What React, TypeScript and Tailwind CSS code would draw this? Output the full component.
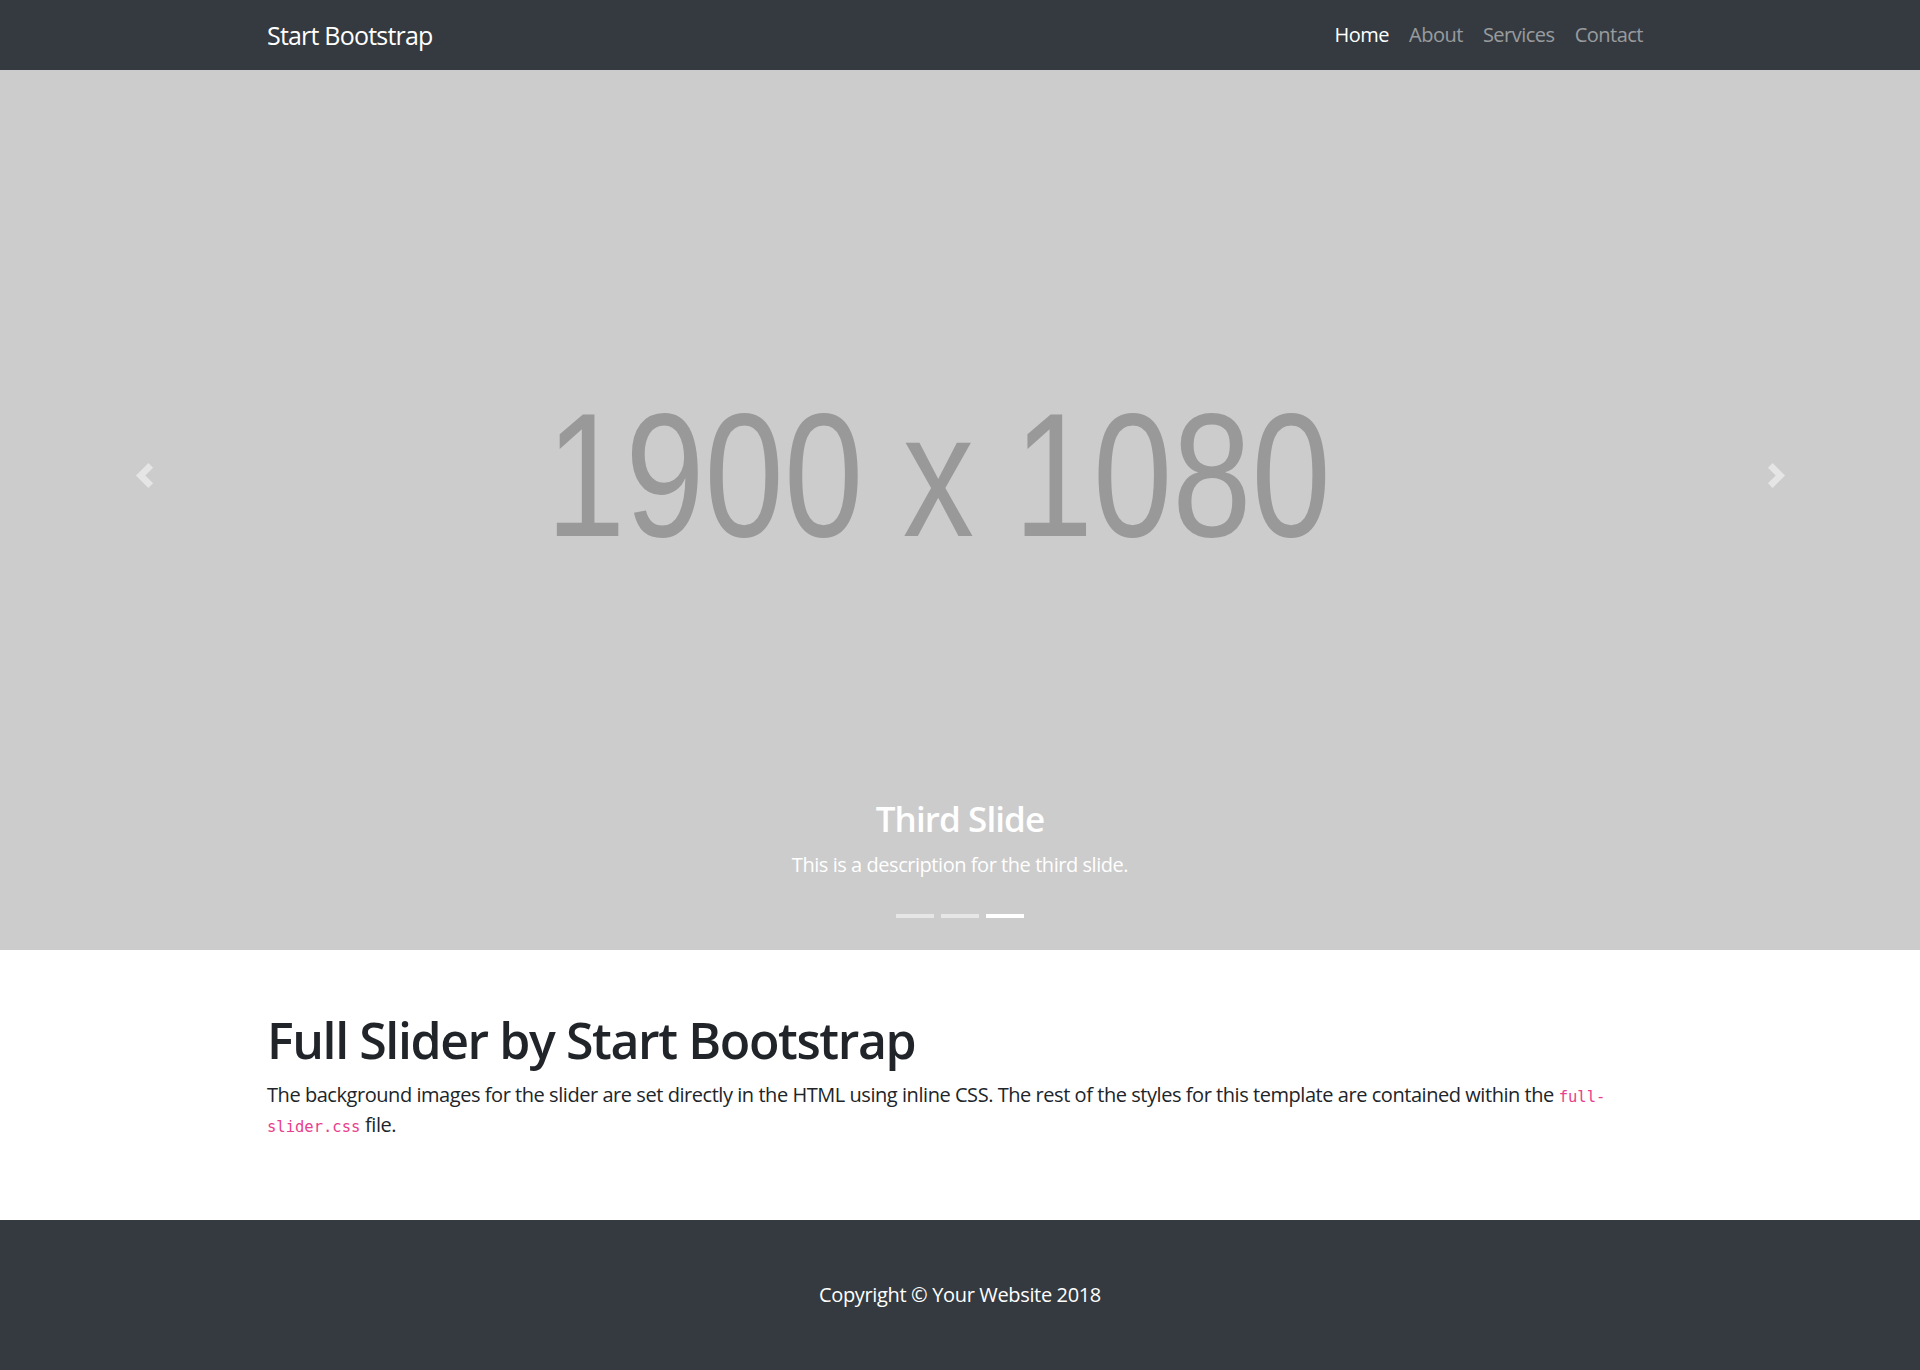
const navLinks = [
  { label: "Home", active: true },
  { label: "About", active: false },
  { label: "Services", active: false },
  { label: "Contact", active: false },
];

const sans = "font-['Open_Sans',sans-serif]";

function Chevron({ dir }: { dir: "prev" | "next" }) {
  // Bootstrap carousel control glyph
  const d =
    dir === "prev"
      ? "M5.25 0l-4 4 4 4 1.5-1.5-2.5-2.5 2.5-2.5-1.5-1.5z"
      : "M2.75 0l-1.5 1.5 2.5 2.5-2.5 2.5 1.5 1.5 4-4-4-4z";
  return (
    <svg viewBox="0 0 8 8" className="w-[25px] h-[25px]" fill="#fff">
      <path d={d} />
    </svg>
  );
}

export default function App() {
  return (
    <div className={`${sans} min-h-[1370px] bg-white`}>
      {/* Navbar */}
      <header className="h-[70px] bg-[#343a40]">
        <div className="w-[1386px] h-full mx-auto flex items-center justify-between">
          <a className="text-[25px] leading-[37px] tracking-[-0.8px] text-white">Start Bootstrap</a>
          <nav className="flex">
            {navLinks.map((l) => (
              <a
                key={l.label}
                className={`px-[10px] text-[20px] leading-[30px] tracking-[-0.5px] ${
                  l.active ? "text-white" : "text-white/50"
                }`}
              >
                {l.label}
              </a>
            ))}
          </nav>
        </div>
      </header>

      {/* Carousel */}
      <section className="relative h-[880px] bg-[#cccccc] overflow-hidden">
        <div className="h-full pb-[70px] flex items-center justify-center">
          <span className="mr-[44px] inline-block scale-x-[0.81] font-['Liberation_Sans',sans-serif] text-[176px] leading-none text-[#999999] select-none whitespace-nowrap">
            1900 x 1080
          </span>
        </div>

        <div className="absolute left-0 top-0 bottom-[70px] w-[15%] flex items-center justify-center opacity-50">
          <Chevron dir="prev" />
        </div>
        <div className="absolute right-0 top-0 bottom-[70px] w-[15%] flex items-center justify-center opacity-50">
          <Chevron dir="next" />
        </div>

        <div className="absolute left-[15%] right-[15%] bottom-[25px] pt-[25px] pb-[25px] text-center text-white">
          <h3 className="text-[35px] leading-[42px] font-semibold tracking-[-0.9px] mb-[10px]">Third Slide</h3>
          <p className="text-[20px] leading-[30px] tracking-[-0.45px] mb-[20px]">
            This is a description for the third slide.
          </p>
        </div>

        <div className="absolute left-0 right-0 bottom-[32px] flex justify-center gap-[7.5px]">
          <span className="w-[37.5px] h-[4px] bg-white/50" />
          <span className="w-[37.5px] h-[4px] bg-white/50" />
          <span className="w-[37.5px] h-[4px] bg-white" />
        </div>
      </section>

      {/* Page content */}
      <section className="w-[1386px] mx-auto py-[60px] text-[#212529]">
        <h1 className="text-[50px] leading-[60px] font-semibold tracking-[-1.4px] mb-[10px]">
          Full Slider by Start Bootstrap
        </h1>
        <p className="text-[20px] leading-[30px] tracking-[-0.45px] mb-[20px]">
          The background images for the slider are set directly in the HTML using inline CSS. The rest of the
          styles for this template are contained within the{" "}
          <code className="font-['DejaVu_Sans_Mono',monospace] text-[15.5px] leading-none tracking-normal text-[#e83e8c]">
            full-
            <br />
            slider.css
          </code>{" "}
          file.
        </p>
      </section>

      {/* Footer */}
      <footer className="py-[60px] bg-[#343a40]">
        <p className="text-center text-white text-[20px] leading-[30px] tracking-[-0.35px]">
          Copyright © Your Website 2018
        </p>
      </footer>
    </div>
  );
}
